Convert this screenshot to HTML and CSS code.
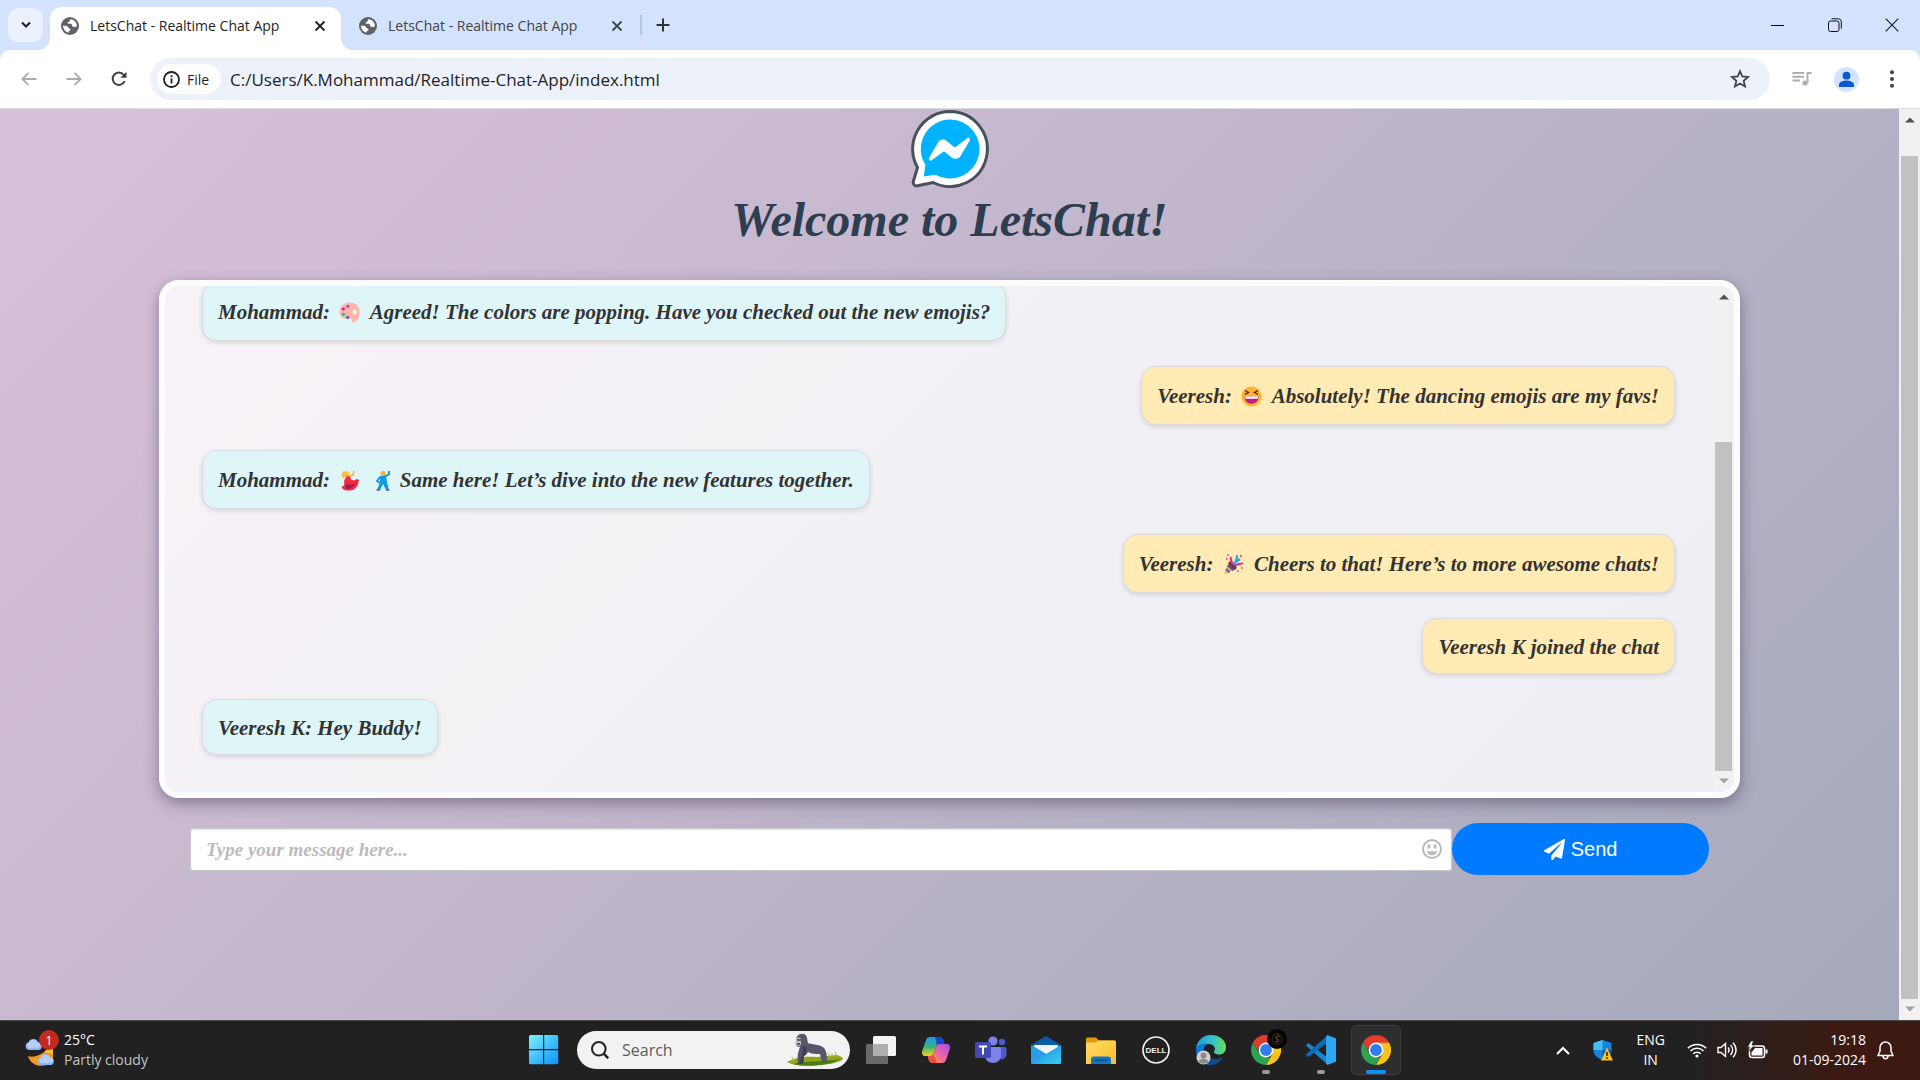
FILE: index.html
```html
<!DOCTYPE html>
<html lang="en">
<head>
<meta charset="utf-8">
<meta name="viewport" content="width=device-width, initial-scale=1">
<title>LetsChat - Realtime Chat App</title>
<link rel="stylesheet" href="styles.css">
</head>
<body>
<svg class="defs" aria-hidden="true">
  <defs>
    <symbol id="globe" viewBox="0 0 18 18"><circle cx="9" cy="9" r="9" fill="#5f6368"/><path d="M10 2.2c-1 .3-1.600.9-1.400 1.700.2.800-.8 1.100-1.600 1.200-.6.100-.4 1 .1 1.400.5.500 1.500.2 2.500.3 1.200.1 1.400 1 1.500 1.900.1.800 1 1.100 1.700 1.200 1 .2 2.700-.1 3-.9A6.900 6.900 0 0 0 10 2.200zM2.100 8.400a7 7 0 0 0 5.300 7.300c.2-.7.3-1.500 1.100-1.900.8-.4 1.200-1.100.8-1.800-.4-.6-1.200-.6-1.700-1-.7-.5-.6-1.500-1.500-1.900-1.200-.5-2.600-.2-4-.7z" fill="#fff"/></symbol>
    <symbol id="cross" viewBox="0 0 12 12"><path d="M1.500 1.500l9 9M10.500 1.500l-9 9" fill="none" stroke="currentColor" stroke-width="1.800"/></symbol>
    <symbol id="chrome" viewBox="0 0 30 30"><path d="M15 15L2.010 7.500A15 15 0 0 1 27.990 7.500z" fill="#e33b2e"/><path d="M15 7.500h13A15 15 0 0 1 15 30l6.500-11.200z" fill="#fbc116"/><path d="M2.010 7.500l6.500 11.300L15 22.500h4.300L15 30A15 15 0 0 1 2.010 7.500z" fill="#2da44e"/><path d="M2.010 7.500A15 15 0 0 1 27.990 7.500H15L8.500 11.300 6.500 15z" fill="#e33b2e"/><circle cx="15" cy="15" r="7.500" fill="#fff"/><circle cx="15" cy="15" r="5.900" fill="#2f7cf0"/></symbol>
    <symbol id="up" viewBox="0 0 10 6"><path d="M0 5.500L5 .5l5 5z" fill="#505050"/></symbol>
    <symbol id="down" viewBox="0 0 10 6"><path d="M0 .5l5 5 5-5z" fill="#a3a3a3"/></symbol>
    <symbol id="cloud" viewBox="0 0 18 12"><path d="M4 12a4 4 0 0 1-.4-7.800A5 5 0 0 1 13 4.200 4 4 0 0 1 14 12z" fill="#8fb4f3"/><path d="M4 10a3 3 0 0 1 0-5.500A5 5 0 0 1 13 4.500 3.500 3.500 0 0 1 16.500 8c-3 3-7 2-12.500 2z" fill="#b4cffa"/></symbol>
    <linearGradient id="gWin" x1="0" y1="0" x2="1" y2="1"><stop offset="0" stop-color="#7df0ff"/><stop offset="1" stop-color="#0a93ff"/></linearGradient>
    <linearGradient id="gCopA" x1="0" y1="0" x2="0" y2="1"><stop offset="0" stop-color="#1e9bf5"/><stop offset=".5" stop-color="#35b27d"/><stop offset="1" stop-color="#f2d312"/></linearGradient>
    <linearGradient id="gCopB" x1="1" y1="0" x2="0" y2="1"><stop offset="0" stop-color="#a14bf0"/><stop offset=".5" stop-color="#f0649f"/><stop offset="1" stop-color="#ffa046"/></linearGradient>
    <linearGradient id="gEdge" x1="0" y1="0" x2="1" y2="0"><stop offset="0" stop-color="#1d9be0"/><stop offset=".6" stop-color="#35c6c8"/><stop offset="1" stop-color="#6fe04e"/></linearGradient>
    <linearGradient id="gFolder" x1="0" y1="0" x2="1" y2="1"><stop offset="0" stop-color="#ffdc6a"/><stop offset="1" stop-color="#fbbd23"/></linearGradient>
    <linearGradient id="gMail" x1="0" y1="0" x2="1" y2="1"><stop offset="0" stop-color="#1e7fd6"/><stop offset="1" stop-color="#35d0fa"/></linearGradient>
  </defs>
</svg>

<header class="browser">
  <div class="tabstrip">
    <button class="tab-search" aria-label="Search tabs"><svg width="10" height="8" viewBox="0 0 10 8"><path d="M1 1.500l4 4 4-4" fill="none" stroke="#1f1f1f" stroke-width="2"/></svg></button>
    <div class="tab tab-active">
      <svg width="18" height="18"><use href="#globe"/></svg>
      <span class="tab-title">LetsChat - Realtime Chat App</span>
      <button class="tab-close" aria-label="Close tab"><svg width="12" height="12"><use href="#cross"/></svg></button>
    </div>
    <div class="tab">
      <svg width="18" height="18"><use href="#globe"/></svg>
      <span class="tab-title">LetsChat - Realtime Chat App</span>
      <button class="tab-close" aria-label="Close tab"><svg width="12" height="12"><use href="#cross"/></svg></button>
    </div>
    <button class="new-tab" aria-label="New tab"><svg width="14" height="14" viewBox="0 0 14 14"><path d="M7 .5v13M.5 7h13" stroke="#333" stroke-width="2"/></svg></button>
    <div class="window-controls">
      <button aria-label="Minimize"><svg width="14" height="14" viewBox="0 0 14 14"><path d="M0 7.500h13" stroke="#000"/></svg></button>
      <button aria-label="Restore"><svg width="14" height="14" viewBox="0 0 14 14" fill="none" stroke="#111"><rect x=".5" y="3" width="10.500" height="10.500" rx="2"/><path d="M3.500.8h7a2.800 2.800 0 0 1 2.800 2.800v7"/></svg></button>
      <button aria-label="Close"><svg width="14" height="14" viewBox="0 0 14 14"><path d="M.7.700l12.600 12.600M13.300.7L.7 13.300" stroke="#222" stroke-width="1.200"/></svg></button>
    </div>
  </div>
  <div class="toolbar">
    <button class="tool" aria-label="Back"><svg width="16" height="14" viewBox="0 0 16 14" fill="none" stroke="#a9abae" stroke-width="1.800"><path d="M15.500 7H1.500M7.500.8L1.300 7l6.200 6.200"/></svg></button>
    <button class="tool" aria-label="Forward"><svg width="16" height="14" viewBox="0 0 16 14" fill="none" stroke="#a9abae" stroke-width="1.800"><path d="M.5 7h14M8.500.8L14.700 7l-6.200 6.200"/></svg></button>
    <button class="tool" aria-label="Reload"><svg width="16" height="16" viewBox="0 0 16 16"><path d="M13.600 10.200A6.200 6.200 0 1 1 12.600 3.700L14 5.300" fill="none" stroke="#3c3f43" stroke-width="2"/><path d="M15.500.7v6H9.500z" fill="#3c3f43"/></svg></button>
    <div class="omnibox">
      <button class="chip"><svg width="17" height="17" viewBox="0 0 17 17"><circle cx="8.500" cy="8.500" r="7.500" fill="none" stroke="#1f1f1f" stroke-width="1.800"/><path d="M8.500 7.500v5M8.500 4.300v1.900" stroke="#1f1f1f" stroke-width="1.800"/></svg>File</button>
      <input class="url" type="text" aria-label="Address" value="C:/Users/K.Mohammad/Realtime-Chat-App/index.html">
      <button class="star" aria-label="Bookmark"><svg width="20" height="20" viewBox="0 0 20 20"><path d="M10 2.200l2.300 5.300 5.700.5-4.300 3.800 1.300 5.700-5-3-5 3 1.300-5.700L2 8l5.700-.5z" fill="none" stroke="#444" stroke-width="1.800"/></svg></button>
    </div>
    <button class="tool" aria-label="Media"><svg width="20" height="16" viewBox="0 0 20 16" fill="none" stroke="#aeaeae" stroke-width="2"><path d="M.5 2h11.500M.5 5.800h11.500M.5 9.600h7.500M15.500 12V2h4"/><circle cx="13" cy="12" r="2.600" fill="#aeaeae" stroke="none"/></svg></button>
    <button class="tool" aria-label="Profile"><svg width="25" height="25" viewBox="0 0 25 25"><circle cx="12.500" cy="12.500" r="12.500" fill="#d3e3fd"/><circle cx="12.500" cy="8.700" r="3.900" fill="#0b57d0"/><path d="M5 20v-2.200c0-3 5-4.300 7.500-4.300s7.500 1.300 7.500 4.300V20z" fill="#0b57d0"/></svg></button>
    <button class="tool" aria-label="Menu"><svg width="6" height="18" viewBox="0 0 6 18" fill="#444"><circle cx="3" cy="2.200" r="2"/><circle cx="3" cy="9" r="2"/><circle cx="3" cy="15.800" r="2"/></svg></button>
  </div>
</header>

<div class="viewport">
  <main class="page">
    <svg class="logo" viewBox="0 0 78 78" role="img" aria-label="LetsChat logo"><path d="M39 1.500a37.500 37.500 0 1 1-17 71L6.500 75.800a3.500 3.500 0 0 1-4.200-4.200L6.500 57.500A37.500 37.500 0 0 1 39 1.500z" fill="#fff" stroke="#48505c" stroke-width="3"/><path d="M39 9.500a29.500 29.500 0 1 1-14.500 55.200L12.700 66.500l1.700-11.700A29.500 29.500 0 0 1 39 9.500z" fill="#00b2ff"/><path d="M18 48l9-15.500c1.800-3 5.800-3.800 8.500-1.700l7.200 6c.6.400 1.500.5 2.100 0l11.400-8.600c1.500-1.100 3.600.6 2.600 2.300L49.500 46c-1.800 3-5.800 3.700-8.500 1.700l-7-5.600c-.6-.5-1.500-.5-2.100 0l-11.200 8.200c-1.600 1.100-3.700-.6-2.700-2.300z" fill="#fff"/></svg>
    <h1>Welcome to LetsChat!</h1>

    <section class="panel" aria-label="Chat">
      <div class="messages">
        <p class="bubble left with-emoji">Mohammad: <svg width="21" height="21" viewBox="0 0 21 21" role="img" aria-label="palette"><path d="M11 .5C4.500.5.500 5 .5 10c0 4.500 3.500 7 7.500 7 2.500 0 3.500-1 4.500 0s-.5 3 2 3.500c4-1 6-6 6-10.500C20.500 4 16.500.500 11 .5zm4.500 11.800a2.200 2.400 0 1 1 0-4.800 2.200 2.400 0 0 1 0 4.800z" fill="#ffb5a8"/><circle cx="4.300" cy="7" r="1.600" fill="#e6168b"/><circle cx="9" cy="4.300" r="1.600" fill="#8f5ac0"/><circle cx="4.500" cy="12.300" r="1.600" fill="#1fbf72"/><circle cx="8.700" cy="15.300" r="1.600" fill="#5560f0"/></svg> Agreed! The colors are popping. Have you checked out the new emojis?</p>
        <p class="bubble right with-emoji">Veeresh: <svg width="21" height="21" viewBox="0 0 21 21" role="img" aria-label="laughing face"><circle cx="10.500" cy="10.500" r="10" fill="#ffb02e"/><path d="M3.500 10.500h14c0 4.500-3 7.200-7 7.200s-7-2.700-7-7.200z" fill="#bb1d80"/><path d="M3.800 10.500h13.400l-.7 2.200H4.500z" fill="#fff"/><path d="M4 4.500l3.500 2L4 8.300M17 4.500l-3.500 2L17 8.300" fill="none" stroke="#402a32" stroke-width="1.300"/></svg> Absolutely! The dancing emojis are my favs!</p>
        <p class="bubble left with-emoji">Mohammad: <svg width="21" height="21" viewBox="0 0 21 21" role="img" aria-label="woman dancing"><path d="M8 5l-3 6 .500 4L2.500 17c1 3 5 4 8 3.500 4 0 6-2 8-5l1.500-5c-1-2-3-1-5 0l-3-1-1-4z" fill="#f22b3c"/><path d="M5.500 14l2 5c4 0 7-2 9-6l-4 2z" fill="#a91650"/><circle cx="8" cy="3.500" r="2.600" fill="#ffc83d"/><path d="M5 2C3 3 3 7 5 7l2-3zM9 6l5-1 1-4" fill="none" stroke="#ffb02e" stroke-width="1.600"/></svg> <svg width="15" height="21" viewBox="3 0 15 21" role="img" aria-label="man dancing"><path d="M8 6l6-1 1 7 2 8h-3l-3-6-3 6H5l3-8z" fill="#0a9be8"/><path d="M8 7l-3 4 3 2M14 6l3-2V1" fill="none" stroke="#138de0" stroke-width="1.800"/><circle cx="11" cy="3.300" r="2.500" fill="#ffb02e"/><path d="M4.500 20H8M14 20h3.500" stroke="#7d4b9e" stroke-width="1.500"/></svg> Same here! Let’s dive into the new features together.</p>
        <p class="bubble right with-emoji">Veeresh: <svg width="21" height="21" viewBox="0 0 21 21" role="img" aria-label="party popper"><path d="M1 20L6 8l7 7z" fill="#fcb52c"/><path d="M3 15l3.500 3.500M4.500 11.500l6 5" stroke="#4c5ad8" stroke-width="2"/><ellipse cx="9.500" cy="11.500" rx="2.600" ry="5" transform="rotate(-45 9.500 11.500)" fill="#74354e"/><path d="M9 10c0-3-2-4-1-7M12 12c2-3 5-1 8-3" fill="none" stroke="#f3218c" stroke-width="2"/><path d="M10 10c3-1 4-5 4-9M13 8l4-3" fill="none" stroke="#25a7f0" stroke-width="2.200"/><path d="M3 5h1.500M18 14h1.500M14 17h1.500M17 2h2M4 1h1.500" stroke="#f3218c" stroke-width="1.500"/></svg> Cheers to that! Here’s to more awesome chats!</p>
        <p class="bubble right">Veeresh K joined the chat</p>
        <p class="bubble left">Veeresh K: Hey Buddy!</p>
      </div>
      <div class="scrollbar panel-bar" aria-hidden="true">
        <svg width="10" height="6"><use href="#up"/></svg>
        <div class="track"><div class="thumb"></div></div>
        <svg width="10" height="6"><use href="#down"/></svg>
      </div>
    </section>

    <form class="composer">
      <div class="field">
        <input type="text" aria-label="Message" placeholder="Type your message here...">
        <button type="button" class="emoji-button" aria-label="Insert emoji"><svg width="20" height="20" viewBox="0 0 20 20"><circle cx="10" cy="10" r="9" fill="none" stroke="#b9b9b9" stroke-width="2"/><ellipse cx="7" cy="7.500" rx="1.500" ry="2.300" fill="#b9b9b9"/><ellipse cx="13" cy="7.500" rx="1.500" ry="2.300" fill="#b9b9b9"/><path d="M4.800 12.300h10.400c-.7 2.700-2.700 4-5.200 4s-4.500-1.300-5.200-4z" fill="#b9b9b9"/></svg></button>
      </div>
      <button type="button" class="send"><svg width="21" height="21" viewBox="0 0 512 512" fill="#fff"><path d="M476 3.200L12.500 270.600c-18.100 10.400-15.800 35.600 2.200 43.200L121 358.400l287.300-253.200c5.500-4.900 13.300 2.600 8.600 8.300L176 407v80.500c0 23.600 28.500 32.900 42.500 15.800L282 426l124.600 52.200c14.200 6 30.400-2.900 33-18.200l72-432C515 7.800 493.300-6.800 476 3.200z"/></svg>Send</button>
    </form>
  </main>
  <div class="scrollbar page-bar" aria-hidden="true">
    <svg width="10" height="6"><use href="#up"/></svg>
    <div class="track"><div class="thumb"></div></div>
    <svg width="10" height="6"><use href="#down"/></svg>
  </div>
</div>

<footer class="taskbar">
  <button class="weather">
    <span class="weather-icon"><svg width="34" height="36" viewBox="0 0 34 36"><path d="M3 24c5 2 14-1 18-6l7-3v14c-8 8-22 6-25-5z" fill="#f8981d"/><path d="M19 20l9-6v8z" fill="#fbc02d"/><use href="#cloud" x="0" y="6" width="18" height="12"/><use href="#cloud" x="12" y="21" width="18" height="12"/></svg><span class="badge">1</span></span>
    <span class="weather-text"><span>25°C</span><span class="dim">Partly cloudy</span></span>
  </button>

  <nav class="apps" aria-label="Taskbar apps">
    <button class="app" aria-label="Start"><svg width="30" height="30" viewBox="0 0 30 30"><path d="M1.500 0H14v14H0V1.500A1.500 1.500 0 0 1 1.500 0zM15.200 0h12.500A1.500 1.500 0 0 1 29.200 1.500V14h-14zM0 15.200h14v14H1.500A1.500 1.500 0 0 1 0 27.700zM15.200 15.200h14v12.500a1.500 1.500 0 0 1-1.500 1.500H15.200z" fill="url(#gWin)"/></svg></button>
    <label class="search">
      <svg width="18" height="18" viewBox="0 0 18 18" fill="none" stroke="#222" stroke-width="2"><circle cx="7.800" cy="7.800" r="6.800"/><path d="M12.700 12.700l4.500 4.500" stroke-width="2.600"/></svg>
      <input type="text" placeholder="Search" aria-label="Search">
      <svg width="56" height="34" viewBox="0 0 56 34"><path d="M0 29c8-5 20-6 30-5l20-2c4 1 6 3 6 4-6 7-48 9-56 3z" fill="#8fa61b"/><path d="M6 31c14-4 32-2 47-5-6 6-36 9-47 5z" fill="#4b7d12"/><path d="M5 24l2 4M41 20l2 5M49 19l-1 5M45 20l0 4" stroke="#c6b340"/><path d="M17 1c-5-1-8 2-8 7-1 3 0 6 4 6-2 5-3 9-2 17h5l1-8c2-1 3-2 4-4 3 2 8 2 12 2l2 8h5c0-5 0-10-3-14-4-4-11-3-16-5-1-5-1-8-4-9z" fill="#57566b"/><path d="M9 6c1-2 4-2 5 0v5c-1 3-5 2-5 0z" fill="#c6c1c6"/><path d="M10 7h4M10 11h3" stroke="#3c3b4c" stroke-width="1.500"/><path d="M15 13c2 4 0 8-3 18h4l1-8c3-2 3-6 2-9z" fill="#3f3e52"/></svg>
    </label>
    <button class="app" aria-label="Task view"><svg width="30" height="28" viewBox="0 0 30 28"><rect x="0" y="8" width="22" height="20" rx="1.500" fill="#696969"/><rect x="7" y="0" width="23" height="20" rx="1.500" fill="#f3f3f3"/><path d="M7 8h15v12H8.500A1.500 1.500 0 0 1 7 18.500z" fill="#aeaeae"/></svg></button>
    <button class="app" aria-label="Copilot"><svg width="28" height="26" viewBox="0 0 28 26"><path d="M8 0h9c3 0 4 2 4.500 4l1 3h-5c-2 0-3 1-3.500 3l-2 6c-.7 2-2 3-4 3H3c-3 0-3.500-3-2.500-6L4 3c.7-2 2-3 4-3z" fill="url(#gCopA)"/><path d="M13 0h4c3 0 4 2 4.500 4l1 3h-5c-1 0-2 .5-2.600 1.500z" fill="#1746c9"/><path d="M20 26h-9c-3 0-4-2-4.500-4l-.800-3H8c2 0 3.300-1 4-3l2-6c.7-2 1.500-3 3.500-3H25c3 0 3.500 3 2.500 6L24 23c-.7 2-2 3-4 3z" fill="url(#gCopB)"/><path d="M15 26h-4c-3 0-4-2-4.500-4l-.800-3H8c2 0 3-.6 3.500-1.500z" fill="#f2503c"/></svg></button>
    <button class="app" aria-label="Teams"><svg width="32" height="28" viewBox="0 0 32 28"><circle cx="18" cy="5" r="4.600" fill="#7b83eb"/><circle cx="27" cy="6" r="3.200" fill="#5059c9"/><path d="M22 11h8a1.500 1.500 0 0 1 1.500 1.500V18c0 4-3 5.500-6 5.500z" fill="#5059c9"/><path d="M10 11h14.500A1.500 1.500 0 0 1 26 12.500V19c0 5-3.500 8-8 8s-8-3-8-8z" fill="#7b83eb"/><rect x="0" y="6" width="16" height="16" rx="1.500" fill="#4249b0"/><path d="M4 10.500h8M8 10.500v8" stroke="#fff" stroke-width="2"/></svg></button>
    <button class="app" aria-label="Mail"><svg width="30" height="28" viewBox="0 0 30 28"><path d="M0 9L15 0l15 9v6H0z" fill="#0a5ca8"/><path d="M3 9h24v12H3z" fill="#f1f3f5"/><path d="M0 9l15 9 15-9v17.500a1.500 1.500 0 0 1-1.500 1.500h-27A1.500 1.500 0 0 1 0 26.500z" fill="url(#gMail)"/><path d="M0 27l15-9L0 9z" fill="#2a9de8"/></svg></button>
    <button class="app" aria-label="File Explorer"><svg width="30" height="27" viewBox="0 0 30 27"><path d="M0 2a1.500 1.500 0 0 1 1.500-1.500H10l3 3h15.500A1.500 1.500 0 0 1 30 5v6H0z" fill="#dd9a06"/><path d="M0 5.500h10l2.500-2h16A1.500 1.500 0 0 1 30 5v22H0z" fill="url(#gFolder)"/><path d="M5 27v-4.500a3 3 0 0 1 3-3h14a3 3 0 0 1 3 3V27z" fill="#0f75c9"/><path d="M8.500 23.300h13" stroke="#0b4a86" stroke-width="1.600"/></svg></button>
    <button class="app" aria-label="Dell"><svg width="28" height="28" viewBox="0 0 28 28"><circle cx="14" cy="14" r="13" fill="none" stroke="#f0f0f0" stroke-width="1.700"/><text class="dell" x="14" y="17" text-anchor="middle">DELL</text></svg></button>
    <button class="app" aria-label="Edge"><svg width="30" height="30" viewBox="0 0 30 30"><path d="M0 15C0 6 7 0 15 0c9 0 15 6 15 12 0 5-3 7.500-7 7.500-3 0-5-1-5-2.500 0-1 1-1.500 1-3 0-3-3-5-7-5-5 0-12 3-12 6z" fill="url(#gEdge)"/><path d="M0 15c0-3 5-7 11-6-4 3-4 7-3 11 2 5 6 8 11 9C8 32 0 25 0 15z" fill="#0f78d4"/><path d="M11 14c-3 5 1 10 8 10 4 0 6-2 8-2-2 5-7 8-12 8-6-2-9-10-4-16z" fill="#114a8b"/><circle cx="7.500" cy="22.500" r="7" fill="#d0d0d0"/><circle cx="7.500" cy="20.500" r="3" fill="#8b8b8b"/><path d="M2.500 26.500c2-4 8-4 10 0-2 3-8 3-10 0z" fill="#8b8b8b"/></svg></button>
    <button class="app running" aria-label="Chrome, second profile"><svg width="30" height="30"><use href="#chrome"/></svg><span class="profile-badge"><svg width="20" height="20" viewBox="0 0 20 20"><circle cx="10" cy="10" r="10" fill="#050505"/><circle cx="10" cy="10" r="5" fill="none" stroke="#3d3011"/><path d="M12.500 7.500c-3-1-5 1-2.500 2.500s2 3-2 2.500" fill="none" stroke="#5e4a1a" stroke-width="1.200"/></svg></span></button>
    <button class="app running" aria-label="Visual Studio Code"><svg width="30" height="30" viewBox="0 0 30 30"><path d="M0 10l2.500-2L22 23v7L1 11.500z" fill="#1585d0"/><path d="M0 20l2.500 2L22 7V0L1 18.500z" fill="#0a6cb5"/><path d="M21.500 0L30 3.500v23L21.500 30 20 28.500V1.500z" fill="#2ea6f2"/></svg></button>
    <button class="app active" aria-label="Chrome"><svg width="30" height="30"><use href="#chrome"/></svg></button>
  </nav>

  <div class="tray">
    <button class="tray-up" aria-label="Show hidden icons"><svg width="14" height="9" viewBox="0 0 14 9"><path d="M1 8l6-6 6 6" fill="none" stroke="#fff" stroke-width="2"/></svg></button>
    <button class="tray-shield" aria-label="Security"><svg width="20" height="21" viewBox="0 0 20 21"><path d="M9.500 0l9 3v7c0 5-4 8-9 10C4 18 .5 15 .5 10V3z" fill="#1684de"/><path d="M9.500 0v10H.5V3z" fill="#45c0f5"/><path d="M9.500 10h9c0 5-4 8-9 10z" fill="#0c59a4"/><path d="M14 7.500L20 20.500H8z" fill="#fdc01c"/><path d="M14 12v4M14 17.300v1.700" stroke="#222" stroke-width="1.500"/></svg></button>
    <button class="lang"><span>ENG</span><span>IN</span></button>
    <button class="status" aria-label="Network, sound and battery">
      <svg width="20" height="16" viewBox="0 0 20 16" fill="none" stroke="#fff" stroke-width="1.500"><path d="M.800 6.200a13 13 0 0 1 18.400 0M3.500 9a9.200 9.200 0 0 1 13 0M6.200 11.700a5.400 5.400 0 0 1 7.600 0"/><circle cx="10" cy="14" r="1.600" fill="#fff" stroke="none"/></svg>
      <svg width="20" height="18" viewBox="0 0 20 18" fill="none" stroke="#fff" stroke-width="1.400"><path d="M1 6.500h3L8.500 2.500v13L4 11.500H1zM11 6.500a3.500 3.500 0 0 1 0 5M13.500 4a7 7 0 0 1 0 10M16 1.700a10.300 10.300 0 0 1 0 14.600"/></svg>
      <svg width="21" height="18" viewBox="0 0 21 18"><rect x="2.500" y="5" width="15" height="11.500" rx="2.500" fill="none" stroke="#fff" stroke-width="1.500"/><path d="M8 7h7.500v7.500h-11v-3z" fill="#fff"/><path d="M18.500 8.500h2v4h-2z" fill="#fff"/><path d="M4 0L.5 6h2.300L1.500 10.500 7.500 4H5l1.500-4z" fill="#fff" stroke="#222" stroke-width=".6"/></svg>
    </button>
    <button class="clock"><span>19:18</span><span>01-09-2024</span></button>
    <button class="bell" aria-label="Notifications"><svg width="17" height="19" viewBox="0 0 17 19" fill="none" stroke="#fff" stroke-width="1.500"><path d="M8.500 1a5.500 5.500 0 0 0-5.500 5.500V10l-2 4.500h15L14 10V6.500A5.500 5.500 0 0 0 8.500 1zM6 15c0 3.500 5 3.500 5 0"/></svg></button>
  </div>
</footer>
</body>
</html>
```
FILE: styles.css
```css
* { box-sizing: border-box; }

body {
  margin: 0;
  height: 100vh;
  display: flex;
  flex-direction: column;
  overflow: hidden;
  font-family: "Open Sans", "Noto Sans", sans-serif;
  font-size: 14px;
  color: #1f1f1f;
}

button {
  display: flex;
  align-items: center;
  justify-content: center;
  margin: 0;
  padding: 0;
  border: 0;
  background: none;
  font: inherit;
  color: inherit;
}

input {
  min-width: 0;
  border: 0;
  background: none;
  font: inherit;
  color: inherit;
}

svg { flex: none; }

.defs { position: absolute; width: 0; height: 0; }

/* Browser chrome */
.browser { background: #d3e3fd; }

.tabstrip {
  display: flex;
  align-items: center;
  height: 50px;
  padding-left: 8px;
}

.tab-search {
  width: 35px;
  height: 34px;
  margin-right: 7px;
  border-radius: 10px;
  background: #ebf2fe;
}

.tab {
  display: flex;
  align-items: center;
  gap: 11px;
  width: 299px;
  height: 43px;
  align-self: flex-end;
  padding: 0 17px 6px 18px;
  color: #444;
}

.tab-active {
  position: relative;
  width: 291px;
  padding: 0 15px 6px 11px;
  border-radius: 12px 12px 0 0;
  background: #fff;
  color: #1f1f1f;
}

.tab-active::before,
.tab-active::after {
  content: "";
  position: absolute;
  bottom: 0;
  width: 12px;
  height: 12px;
}

.tab-active::before {
  left: -12px;
  background: radial-gradient(circle at 0 0, transparent 12px, #fff 12px);
}

.tab-active::after {
  right: -12px;
  background: radial-gradient(circle at 100% 0, transparent 12px, #fff 12px);
}

.tab-title { flex: 1; white-space: nowrap; }

.new-tab {
  height: 20px;
  padding-left: 14px;
  border-left: 2px solid #a8c7fa;
}

.window-controls { display: flex; margin-left: auto; }
.window-controls button { width: 57px; height: 48px; }

.toolbar {
  display: flex;
  align-items: center;
  height: 59px;
  padding: 0 6px;
  border-bottom: 1px solid #dcdcdf;
  border-radius: 10px 10px 0 0;
  background: #fff;
}

.tool { width: 45px; height: 40px; }

.omnibox {
  flex: 1;
  display: flex;
  align-items: center;
  height: 42px;
  margin: 0 9px;
  padding: 0 20px 0 7px;
  border-radius: 21px;
  background: #ecf1fa;
}

.chip {
  justify-content: flex-start;
  gap: 7px;
  width: 64px;
  height: 30px;
  padding-left: 6px;
  border-radius: 15px;
  background: #fff;
}

.url { flex: 1; padding: 0 9px; font-size: 17px; }

/* Scrollbars */
.scrollbar {
  flex: none;
  display: flex;
  flex-direction: column;
  align-items: center;
  gap: 7px;
  width: 21px;
  padding: 8px 0;
  background: #f1f1f1;
}

.track { flex: 1; display: flex; flex-direction: column; justify-content: flex-end; width: 17px; }
.thumb { background: #c1c1c1; }
.panel-bar .thumb { height: 71%; }
.page-bar .thumb { height: 97%; }

/* Chat page */
.viewport { flex: 1; display: flex; min-height: 0; }

.page {
  flex: 1;
  display: flex;
  flex-direction: column;
  align-items: center;
  padding-top: 1px;
  overflow: hidden;
  background: linear-gradient(135deg, #dac1da, #a4a9bb);
  font-family: "Liberation Serif", serif;
  font-weight: bold;
  font-style: italic;
}

.logo { width: 78px; height: 78px; }

h1 {
  margin: 4px 0 32px;
  font-size: 48px;
  line-height: 56px;
  color: #2c3e50;
}

.panel {
  display: flex;
  width: 84%;
  max-width: 1581px;
  height: 518px;
  border: 6px solid #fcfcfd;
  border-radius: 20px;
  overflow: hidden;
  background: rgba(255, 255, 255, 0.8);
  box-shadow: 0 5px 15px rgba(50, 40, 70, 0.45);
}

.messages {
  flex: 1;
  display: flex;
  flex-direction: column;
  justify-content: flex-end;
  gap: 25px;
  padding: 0 38px 37px 37px;
  overflow: hidden;
}

.bubble {
  flex: none;
  margin: 0;
  padding: 15px 15px 13px;
  border: 1px solid #dcdce0;
  border-radius: 15px;
  font-size: 21px;
  line-height: 26px;
  color: #333;
  box-shadow: 0 2px 5px rgba(0, 0, 0, 0.12);
}

.bubble svg { margin: 0 5px 0 4px; vertical-align: -4px; }
.with-emoji { line-height: 29px; }
.left { align-self: flex-start; background: #dff6f9; }
.right { align-self: flex-end; background: #ffebb3; }

.composer {
  display: flex;
  align-items: center;
  width: 80%;
  margin-top: 25px;
}

.field {
  flex: 1;
  display: flex;
  align-items: center;
  height: 43px;
  padding: 0 9px 0 15px;
  border: 1px solid #c8c8cc;
  border-radius: 3px;
  background: #fff;
  box-shadow: inset 0 1px 2px rgba(0, 0, 0, 0.1);
}

.field input { flex: 1; padding: 2px 0 0; font-size: 19px; }
.field input::placeholder { color: #bbb; }

.send {
  gap: 6px;
  width: 257px;
  height: 52px;
  border-radius: 26px;
  background: #007bff;
  font-family: "Liberation Sans", sans-serif;
  font-size: 20px;
  font-weight: normal;
  font-style: normal;
  color: #fff;
}

/* Taskbar */
.taskbar {
  display: grid;
  grid-template-columns: 1fr auto 1fr;
  align-items: center;
  height: 60px;
  padding-bottom: 1px;
  border-top: 1px solid #4a484b;
  background: linear-gradient(90deg, #212121 88%, #3c1a13 96%);
  color: #fff;
}

.weather { gap: 5px; justify-content: flex-start; padding-left: 25px; line-height: 20px; }
.weather-icon { position: relative; height: 36px; }
.weather-text { display: flex; flex-direction: column; align-items: flex-start; }
.dim { color: #c4c4c4; }

.badge {
  position: absolute;
  top: -2px;
  left: 14px;
  width: 20px;
  height: 20px;
  border-radius: 50%;
  background: #c42b1c;
  font-size: 13px;
  text-align: center;
}

.apps { display: flex; align-items: center; gap: 5px; }
.app { position: relative; width: 50px; height: 50px; border-radius: 5px; }
.active { border: 1px solid #3d3d3d; background: #2e2e2e; }

.running::after,
.active::after {
  content: "";
  position: absolute;
  bottom: 1px;
  width: 8px;
  height: 4px;
  border-radius: 2px;
  background: #9a9a9a;
}

.active::after { bottom: 0; width: 20px; background: #0a93ff; }
.profile-badge { position: absolute; top: 4px; right: 4px; height: 20px; }
.dell { font: bold 8px "Liberation Sans", sans-serif; fill: #f0f0f0; }

.search {
  display: flex;
  align-items: center;
  gap: 13px;
  width: 273px;
  height: 38px;
  margin: 0 1px 0 3px;
  padding: 0 7px 0 14px;
  border-radius: 19px;
  background: #f2f2f2;
}

.search input { flex: 1; padding: 0; font-size: 16px; }
.search input::placeholder { color: #5c5c5c; }

.tray { display: flex; align-items: center; justify-content: flex-end; padding-right: 26px; line-height: 20px; }
.tray-up { margin-right: 23px; }
.tray-shield { margin-right: 23px; }
.lang { flex-direction: column; margin-right: 22px; }
.status { gap: 10px; margin-right: 25px; }
.clock { flex-direction: column; align-items: flex-end; margin-right: 11px; }
```
